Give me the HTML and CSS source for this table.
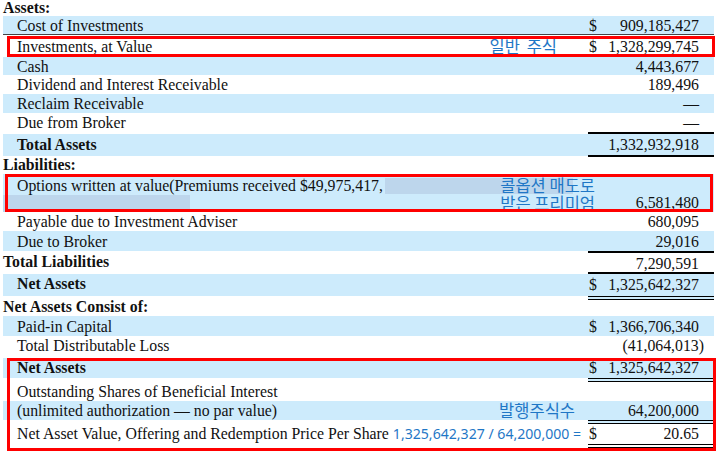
FILE: index.html
```html
<!DOCTYPE html>
<html>
<head>
<meta charset="utf-8">
<link rel="stylesheet" href="styles.css">
</head>
<body>
<div class="sheet">
  <div class="head">Assets:</div>
  <div class="row blue h18 rule-below">
    <div class="label">Cost of Investments</div>
    <div class="val"><span class="cur">$</span><span class="num">909,185,427</span></div>
  </div>
  <div class="boxed box-inv">
    <div class="row h23">
      <div class="label">Investments, at Value</div>
      <div class="note note-inv">일반 주식</div>
      <div class="val"><span class="cur">$</span><span class="num">1,328,299,745</span></div>
    </div>
  </div>
  <div class="row blue h18">
    <div class="label">Cash</div>
    <div class="val"><span class="num">4,443,677</span></div>
  </div>
  <div class="row">
    <div class="label">Dividend and Interest Receivable</div>
    <div class="val"><span class="num">189,496</span></div>
  </div>
  <div class="row blue">
    <div class="label">Reclaim Receivable</div>
    <div class="val"><span class="num">—</span></div>
  </div>
  <div class="row">
    <div class="label">Due from Broker</div>
    <div class="val"><span class="num">—</span></div>
  </div>
  <div class="row total-assets">
    <div class="label bold blue-cell">Total Assets</div>
    <div class="val top under blue-cell"><span class="num">1,332,932,918</span></div>
  </div>
  <div class="head h18">Liabilities:</div>
  <div class="boxed box-opt">
    <div class="row blue h38">
      <div class="label">
        <div>Options written at value(Premiums received $49,975,417,<span class="hl"></span></div>
        <div class="hl2"></div>
      </div>
      <div class="note note-opt">콜옵션 매도로<br>받은 프리미엄</div>
      <div class="val bottom"><span class="num">6,581,480</span></div>
    </div>
  </div>
  <div class="row">
    <div class="label">Payable due to Investment Adviser</div>
    <div class="val"><span class="num">680,095</span></div>
  </div>
  <div class="row blue h20">
    <div class="label">Due to Broker</div>
    <div class="val"><span class="num">29,016</span></div>
  </div>
  <div class="row flush">
    <div class="label bold outdent">Total Liabilities</div>
    <div class="val top"><span class="num">7,290,591</span></div>
  </div>
  <div class="row net">
    <div class="label bold blue-cell">Net Assets</div>
    <div class="val top dbl blue-cell"><span class="cur">$</span><span class="num">1,325,642,327</span></div>
  </div>
  <div class="head h18">Net Assets Consist of:</div>
  <div class="row blue h20">
    <div class="label">Paid-in Capital</div>
    <div class="val"><span class="cur">$</span><span class="num">1,366,706,340</span></div>
  </div>
  <div class="row">
    <div class="label">Total Distributable Loss</div>
    <div class="val"><span class="num">(41,064,013<span class="paren">)</span></span></div>
  </div>
  <div class="boxed box-nav">
    <div class="row net2">
      <div class="label bold blue-cell">Net Assets</div>
      <div class="val dbl blue-cell"><span class="cur">$</span><span class="num">1,325,642,327</span></div>
    </div>
    <div class="row">
      <div class="label">Outstanding Shares of Beneficial Interest</div>
      <div class="val"></div>
    </div>
    <div class="row shares">
      <div class="label blue-cell">(unlimited authorization — no par value)</div>
      <div class="note note-shares">발행주식수</div>
      <div class="val dbl blue-cell"><span class="num">64,200,000</span></div>
    </div>
    <div class="row navrow">
      <div class="label">Net Asset Value, Offering and Redemption Price Per Share <span class="calc">1,325,642,327 / 64,200,000 =</span></div>
      <div class="val dbl"><span class="cur">$</span><span class="num">20.65</span></div>
    </div>
  </div>
</div>
</body>
</html>
```

FILE: styles.css
```css
* { box-sizing: border-box; }
html, body { margin: 0; padding: 0; background: #fff; }
body {
  font-family: "Liberation Serif", "Times New Roman", serif;
  font-size: 15.8px;
  color: #111;
  width: 720px;
  height: 454px;
  overflow: hidden;
}
.sheet { width: 720px; }

.head {
  height: 16px;
  line-height: 16px;
  padding-left: 3px;
  font-weight: bold;
}
.head.h18 { height: 18px; line-height: 18px; }

.row {
  display: grid;
  grid-template-columns: 1fr 126px;
  margin: 0 6px 0 3px;
  height: 19px;
  line-height: 20px;
}
.row.h18 { height: 18px; line-height: 19px; }
.row.h20 { height: 20px; line-height: 21px; }
.row.h23 { height: 23px; line-height: 25px; }
.row.h38 { height: 38px; line-height: 19px; padding-top: 2px; }
.blue, .blue-cell { background: #cdebfc; }

.rule-below { box-shadow: 0 1px 0 #444; position: relative; z-index: 0; }

.label {
  grid-column: 1;
  grid-row: 1;
  padding-left: 14px;
  white-space: nowrap;
}
.label.bold { font-weight: bold; }
.label.outdent { padding-left: 0; }
.note {
  grid-column: 1;
  grid-row: 1;
  justify-self: end;
  font-family: "Noto Sans CJK KR", "Noto Sans", sans-serif;
  color: #1f77c6;
  font-size: 16.5px;
  white-space: nowrap;
}
.note-inv { margin-right: 31px; word-spacing: 3px; }
.note-opt { margin-right: -7px; line-height: 18px; position: relative; z-index: 1; }
.note-shares { margin-right: 13px; }

.val {
  grid-column: 2;
  grid-row: 1;
  display: flex;
  justify-content: space-between;
  padding: 0 15px 0 1px;
}
.val .num { margin-left: auto; white-space: nowrap; }
.val.bottom { align-items: flex-end; }
.val.top { border-top: 2px solid #000; }
.val.under { border-bottom: 2px solid #000; }
.val.dbl { border-bottom: 4px double #000; }
.paren { margin-right: -5px; }

.total-assets { height: 24px; background: transparent; }
.total-assets .label { margin-top: 2px; margin-bottom: 1px; line-height: 22px; }
.total-assets .val { line-height: 21px; }

.flush { height: 21px; line-height: 21px; }
.net { height: 26px; line-height: 22px; }
.net .label { margin-bottom: 4px; margin-top: 2px; line-height: 20px; }

.net2 { height: 24px; line-height: 20px; margin-top: 3px; }
.net2 .label { margin-bottom: 4px; line-height: 20px; }
.shares { height: 23px; line-height: 19px; }
.shares .label { margin-bottom: 4px; }
.navrow { height: 24px; line-height: 20px; }

.hl {
  display: inline-block;
  width: 188px;
  height: 16px;
  margin-left: 2px;
  vertical-align: -3px;
  background: #bdd6ec;
}
.hl2 {
  width: 187px;
  height: 17px;
  margin-left: -14px;
  background: #bdd6ec;
}
.calc {
  font-family: "Noto Sans", sans-serif;
  font-size: 14.1px;
  color: #1f77c6;
}

.boxed { position: relative; }
.boxed::after {
  content: "";
  position: absolute;
  border: 3px solid #f00;
  pointer-events: none;
  z-index: 2;
}
.box-inv::after { top: 2px; bottom: 0; left: 7px; right: 5px; }
.box-opt::after { top: 0; bottom: 0; left: 5px; right: 7px; }
.box-nav::after { top: 0; bottom: -3px; left: 7px; right: 4px; }
```
